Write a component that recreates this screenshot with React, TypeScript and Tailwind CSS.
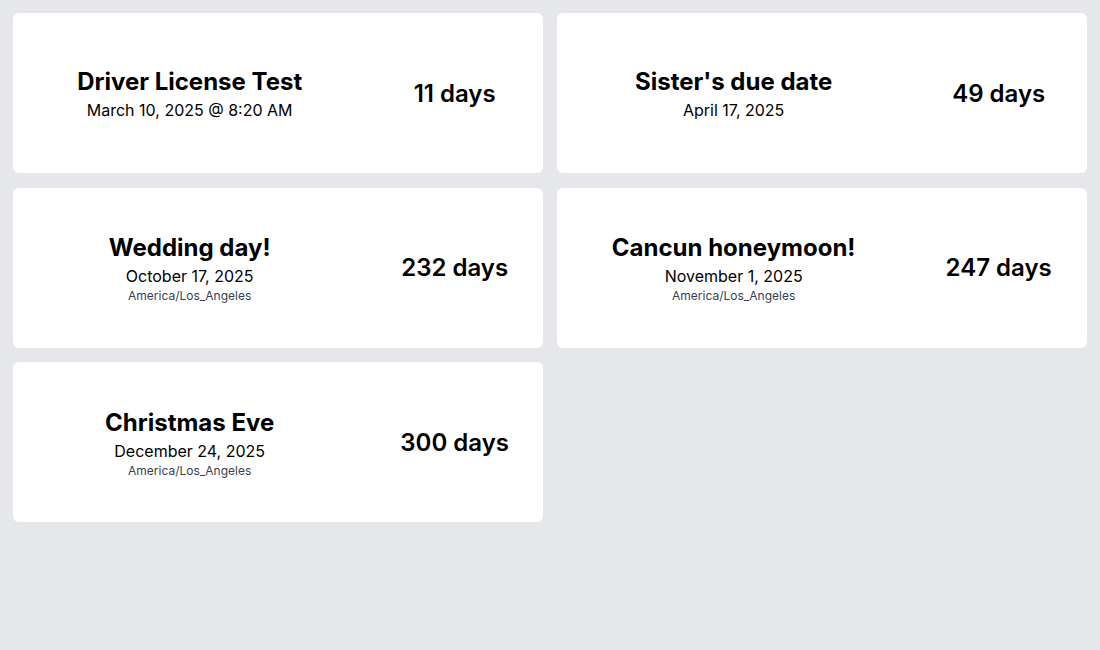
import React from "react";

type Item = { title: string; date: string; tz?: string; days: string };

const items: Item[] = [
  { title: "Driver License Test", date: "March 10, 2025 @ 8:20 AM", days: "11 days" },
  { title: "Sister's due date", date: "April 17, 2025", days: "49 days" },
  { title: "Wedding day!", date: "October 17, 2025", tz: "America/Los_Angeles", days: "232 days" },
  { title: "Cancun honeymoon!", date: "November 1, 2025", tz: "America/Los_Angeles", days: "247 days" },
  { title: "Christmas Eve", date: "December 24, 2025", tz: "America/Los_Angeles", days: "300 days" },
];

export default function App() {
  return (
    <div
      className="min-h-[650px] w-full bg-[#e5e7eb] p-[13px]"
      style={{ fontFamily: "Inter, 'Noto Sans', sans-serif" }}
    >
      <div className="grid grid-cols-2 gap-x-[14px] gap-y-[14.5px]">
        {items.map((it) => (
          <div
            key={it.title}
            className="grid h-[160px] grid-cols-3 items-center rounded-md bg-white pt-px text-black"
          >
            <div className="col-span-2 flex flex-col items-center text-center">
              <div className="text-2xl font-bold">{it.title}</div>
              <div className="text-base">{it.date}</div>
              {it.tz && <div className="text-xs text-gray-700">{it.tz}</div>}
            </div>
            <div className="text-center text-2xl font-semibold">{it.days}</div>
          </div>
        ))}
      </div>
    </div>
  );
}
